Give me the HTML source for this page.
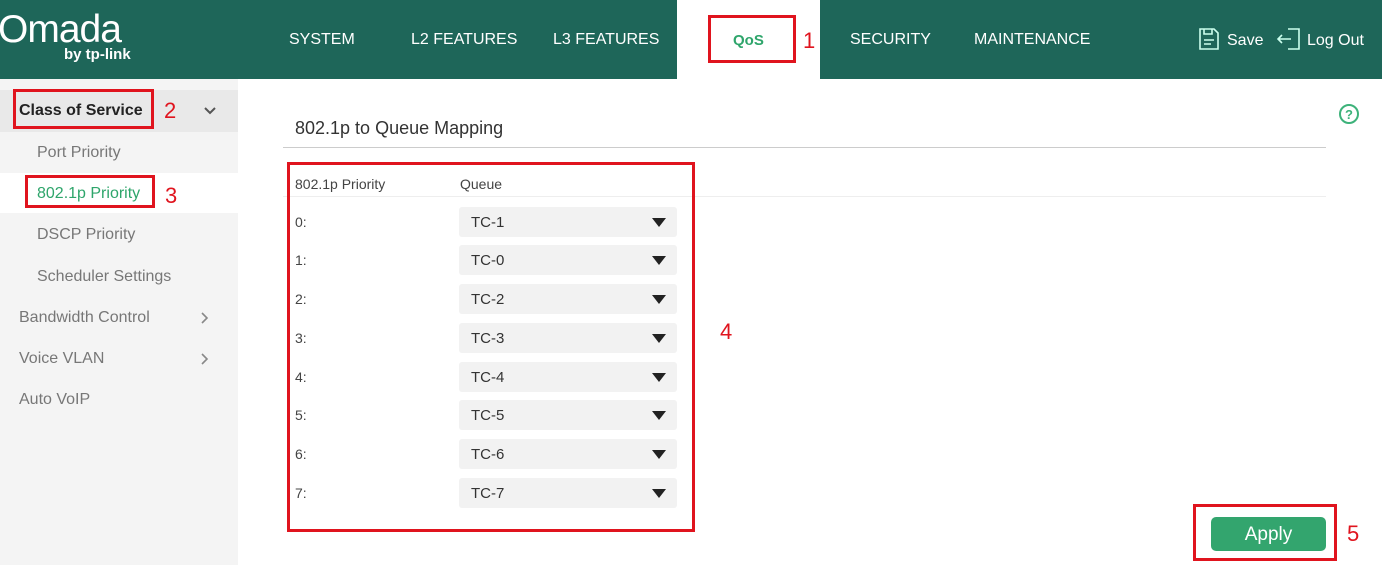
<!DOCTYPE html>
<html><head><meta charset="utf-8"><style>
*{margin:0;padding:0;box-sizing:border-box}
body{width:1382px;height:565px;position:relative;overflow:hidden;background:#fff;font-family:"Liberation Sans",Arial,sans-serif}
.a{position:absolute;white-space:nowrap}
.hdr{left:0;top:0;width:1382px;height:79px;background:#1e6659}
.nav{color:#fff;font-size:16px;top:31px}
.side{left:0;top:79px;width:238px;height:486px;background:#f4f4f4}
.si{color:#777;font-size:16px}
.red{border:3px solid #e0141e}
.rn{color:#e0141e;font-size:22px}
.dd{left:459px;width:218px;height:30px;background:#f2f2f2;border-radius:3px}
.dd span{position:absolute;left:12px;top:7px;font-size:15px;color:#333}
.dd i{position:absolute;right:11px;top:11px;width:0;height:0;border-left:7px solid transparent;border-right:7px solid transparent;border-top:9px solid #222}
.lb{left:295px;font-size:14px;color:#444}
</style></head><body>
<div class="a hdr"></div>
<div class="a" style="left:-2px;top:8px;color:#fff;font-size:39px;letter-spacing:-1px">Omada</div>
<div class="a" style="left:64px;top:46px;color:#fff;font-size:15px;font-weight:bold">by tp-link</div>
<div class="a nav" style="left:289px">SYSTEM</div>
<div class="a nav" style="left:411px">L2 FEATURES</div>
<div class="a nav" style="left:553px">L3 FEATURES</div>
<div class="a" style="left:677px;top:0;width:143px;height:79px;background:#fff"></div>
<div class="a red" style="left:708px;top:15px;width:88px;height:48px"></div>
<div class="a" style="left:733px;top:32px;color:#2ea56b;font-size:15px;font-weight:bold">QoS</div>
<div class="a rn" style="left:803px;top:28px">1</div>
<div class="a nav" style="left:850px">SECURITY</div>
<div class="a nav" style="left:974px">MAINTENANCE</div>
<svg class="a" style="left:1197px;top:27px" width="24" height="24" viewBox="0 0 24 24" fill="none" stroke="#cfe" stroke-width="1.6"><path d="M3 2h14l4 4v16H3z M7 2v5h8V2 M7 13h10 M7 17h7"/></svg>
<div class="a" style="left:1227px;top:32px;color:#fff;font-size:16px">Save</div>
<svg class="a" style="left:1276px;top:27px" width="26" height="24" viewBox="0 0 26 24" fill="none" stroke="#cfe" stroke-width="1.6"><path d="M12 2h11v20H12 M2 12h13 M6 8l-4 4 4 4"/></svg>
<div class="a" style="left:1307px;top:32px;color:#fff;font-size:16px">Log Out</div>

<div class="a side"></div>
<div class="a" style="left:0;top:90px;width:238px;height:42px;background:#e9e9e9"></div>
<div class="a red" style="left:13px;top:89px;width:141px;height:40px"></div>
<div class="a" style="left:19px;top:102px;font-size:16px;font-weight:bold;color:#222">Class of Service</div>
<div class="a rn" style="left:164px;top:98px">2</div>
<svg class="a" style="left:203px;top:106px" width="14" height="10"><path d="M2 2l5 5 5-5" fill="none" stroke="#555" stroke-width="2"/></svg>
<div class="a si" style="left:37px;top:144px">Port Priority</div>
<div class="a" style="left:0;top:173px;width:238px;height:40px;background:#fff"></div>
<div class="a red" style="left:25px;top:175px;width:130px;height:33px"></div>
<div class="a" style="left:37px;top:185px;font-size:16px;color:#2ea56b">802.1p Priority</div>
<div class="a rn" style="left:165px;top:183px">3</div>
<div class="a si" style="left:37px;top:226px">DSCP Priority</div>
<div class="a si" style="left:37px;top:268px">Scheduler Settings</div>
<div class="a si" style="left:19px;top:309px">Bandwidth Control</div>
<div class="a si" style="left:19px;top:350px">Voice VLAN</div>
<div class="a si" style="left:19px;top:391px">Auto VoIP</div>
<svg class="a" style="left:200px;top:311px" width="10" height="14"><path d="M2 2l5 5-5 5" fill="none" stroke="#888" stroke-width="1.6"/></svg>
<svg class="a" style="left:200px;top:352px" width="10" height="14"><path d="M2 2l5 5-5 5" fill="none" stroke="#888" stroke-width="1.6"/></svg>

<div class="a" style="left:295px;top:118px;font-size:18px;color:#333">802.1p to Queue Mapping</div>
<div class="a" style="left:283px;top:147px;width:1043px;height:1px;background:#ccc"></div>
<svg class="a" style="left:1338px;top:103px" width="22" height="22"><circle cx="11" cy="11" r="9" fill="none" stroke="#3db27a" stroke-width="2"/><text x="11" y="16" text-anchor="middle" font-size="13" font-weight="bold" fill="#3db27a" font-family="Liberation Sans">?</text></svg>
<div class="a" style="left:283px;top:196px;width:1043px;height:1px;background:#eee"></div>
<div class="a red" style="left:287px;top:162px;width:408px;height:370px"></div>
<div class="a lb" style="top:176px">802.1p Priority</div>
<div class="a" style="left:460px;top:176px;font-size:14px;color:#444">Queue</div>
<div class="a lb" style="top:214px">0:</div><div class="a dd" style="top:207px"><span>TC-1</span><i></i></div>
<div class="a lb" style="top:252px">1:</div><div class="a dd" style="top:245px"><span>TC-0</span><i></i></div>
<div class="a lb" style="top:291px">2:</div><div class="a dd" style="top:284px"><span>TC-2</span><i></i></div>
<div class="a lb" style="top:330px">3:</div><div class="a dd" style="top:323px"><span>TC-3</span><i></i></div>
<div class="a lb" style="top:369px">4:</div><div class="a dd" style="top:362px"><span>TC-4</span><i></i></div>
<div class="a lb" style="top:407px">5:</div><div class="a dd" style="top:400px"><span>TC-5</span><i></i></div>
<div class="a lb" style="top:446px">6:</div><div class="a dd" style="top:439px"><span>TC-6</span><i></i></div>
<div class="a lb" style="top:485px">7:</div><div class="a dd" style="top:478px"><span>TC-7</span><i></i></div>
<div class="a rn" style="left:720px;top:319px">4</div>
<div class="a red" style="left:1193px;top:504px;width:144px;height:57px"></div>
<div class="a" style="left:1211px;top:517px;width:115px;height:34px;background:#33a56e;border-radius:5px;color:#fff;font-size:19px;text-align:center;line-height:36px">Apply</div>
<div class="a rn" style="left:1347px;top:521px">5</div>
</body></html>
